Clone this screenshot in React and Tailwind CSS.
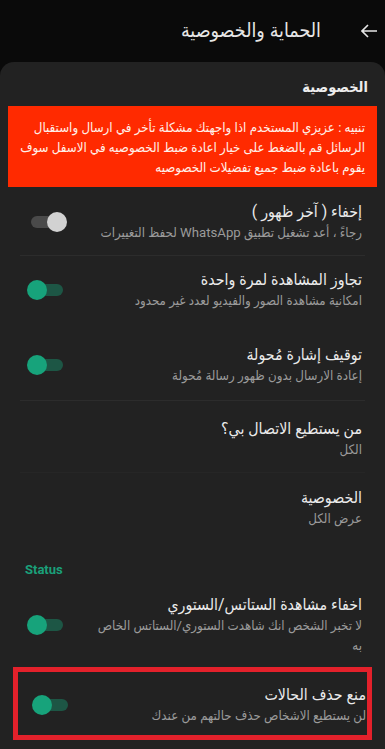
import React from "react";

const Toggle = ({ on }) => (
  <div className="relative h-5 w-10 shrink-0" dir="ltr">
    <div
      className={`absolute left-1 right-1 top-[4px] h-[12px] rounded-full ${
        on ? "bg-[#1d5645]" : "bg-[#4a4a4a]"
      }`}
    />
    <div
      className={`absolute top-0 h-5 w-5 rounded-full ${
        on ? "left-0 bg-[#17a37b]" : "right-0 bg-[#d2d2d2]"
      }`}
    />
  </div>
);

const Row = ({ title, sub, toggle, className = "" }) => (
  <div className={`flex items-center gap-7 pl-[27px] pr-[23px] ${className}`}>
    <div className="flex-1">
      <p className="text-[15.8px] leading-[22px] text-[#ebebeb]">{title}</p>
      <p className="text-[13.2px] leading-[20px] text-[#9b9b9b]">{sub}</p>
    </div>
    {toggle !== undefined && <Toggle on={toggle} />}
  </div>
);

const Divider = () => <div className="mx-5 h-px bg-[#2c2c2c]" />;

export default function App() {
  return (
    <div
      dir="rtl"
      className="min-h-[749px] w-[385px] bg-[#0a0a0a]"
      style={{ fontFamily: 'Roboto, "DejaVu Sans Condensed", "DejaVu Sans", sans-serif' }}
    >
      <header className="flex h-[62px] items-center gap-[40px] pr-[7px]">
        <svg width="17" height="14" viewBox="0 0 17 14" className="text-[#e6e6e6]">
          <path d="M1 7h15M7 1 1 7l6 6" fill="none" stroke="currentColor" strokeWidth="1.6" />
        </svg>
        <h1 className="text-[19.5px] text-[#e6e6e6]">الحماية والخصوصية</h1>
      </header>

      <main className="min-h-[687px] rounded-t-[14px] bg-[#222222] pb-3">
        <h2 className="pr-[17px] pt-4 text-[14.5px] font-semibold leading-5 text-[#ededed]">الخصوصية</h2>

        <div className="mx-2 mt-2 bg-[#ff2a00] pb-[9px] pl-[10px] pr-3 pt-3 text-[13.2px] leading-5 text-[#fff1ea]">
          تنبيه : عزيزي المستخدم اذا واجهتك مشكلة تأخر في ارسال واستقبال الرسائل قم بالضغط على خيار اعادة ضبط الخصوصيه في الاسفل سوف يقوم باعادة ضبط جميع تفضيلات الخصوصيه
        </div>

        <Row className="pb-3 pt-[14px]" title="إخفاء ( آخر ظهور )" sub="رجاءً ، أعد تشغيل تطبيق WhatsApp لحفظ التغييرات" toggle={false} />
        <Divider />
        <Row className="pt-[13px]" title="تجاوز المشاهدة لمرة واحدة" sub="امكانية مشاهدة الصور والفيديو لعدد غير محدود" toggle={true} />
        <Row className="pb-[14px] pt-[33px]" title="توقيف إشارة مُحولة" sub="إعادة الارسال بدون ظهور رسالة مُحولة" toggle={true} />
        <Divider />
        <Row className="pb-[12px] pt-[17px]" title="من يستطيع الاتصال بي؟" sub="الكل" />
        <div className="mx-5 h-px bg-[#262626]" />
        <Row className="pt-[14px]" title="الخصوصية" sub="عرض الكل" />

        <p dir="ltr" className="pl-[25px] pt-[31px] text-[13px] font-bold leading-5 text-[#1aa07a]" style={{ fontFamily: 'Roboto, sans-serif' }}>Status</p>

        <Row className="pt-[14px]" title="اخفاء مشاهدة الستاتس/الستوري" sub="لا تخبر الشخص انك شاهدت الستوري/الستاتس الخاص به" toggle={true} />

        <div className="mx-[13px] mt-[11px] border-[5px] border-[#e3212b] pb-[9px] pt-[12px]">
          <Row className="!pl-[14px] !pr-[1px]" title="منع حذف الحالات" sub="لن يستطيع الاشخاص حذف حالتهم من عندك" toggle={true} />
        </div>
      </main>
    </div>
  );
}
